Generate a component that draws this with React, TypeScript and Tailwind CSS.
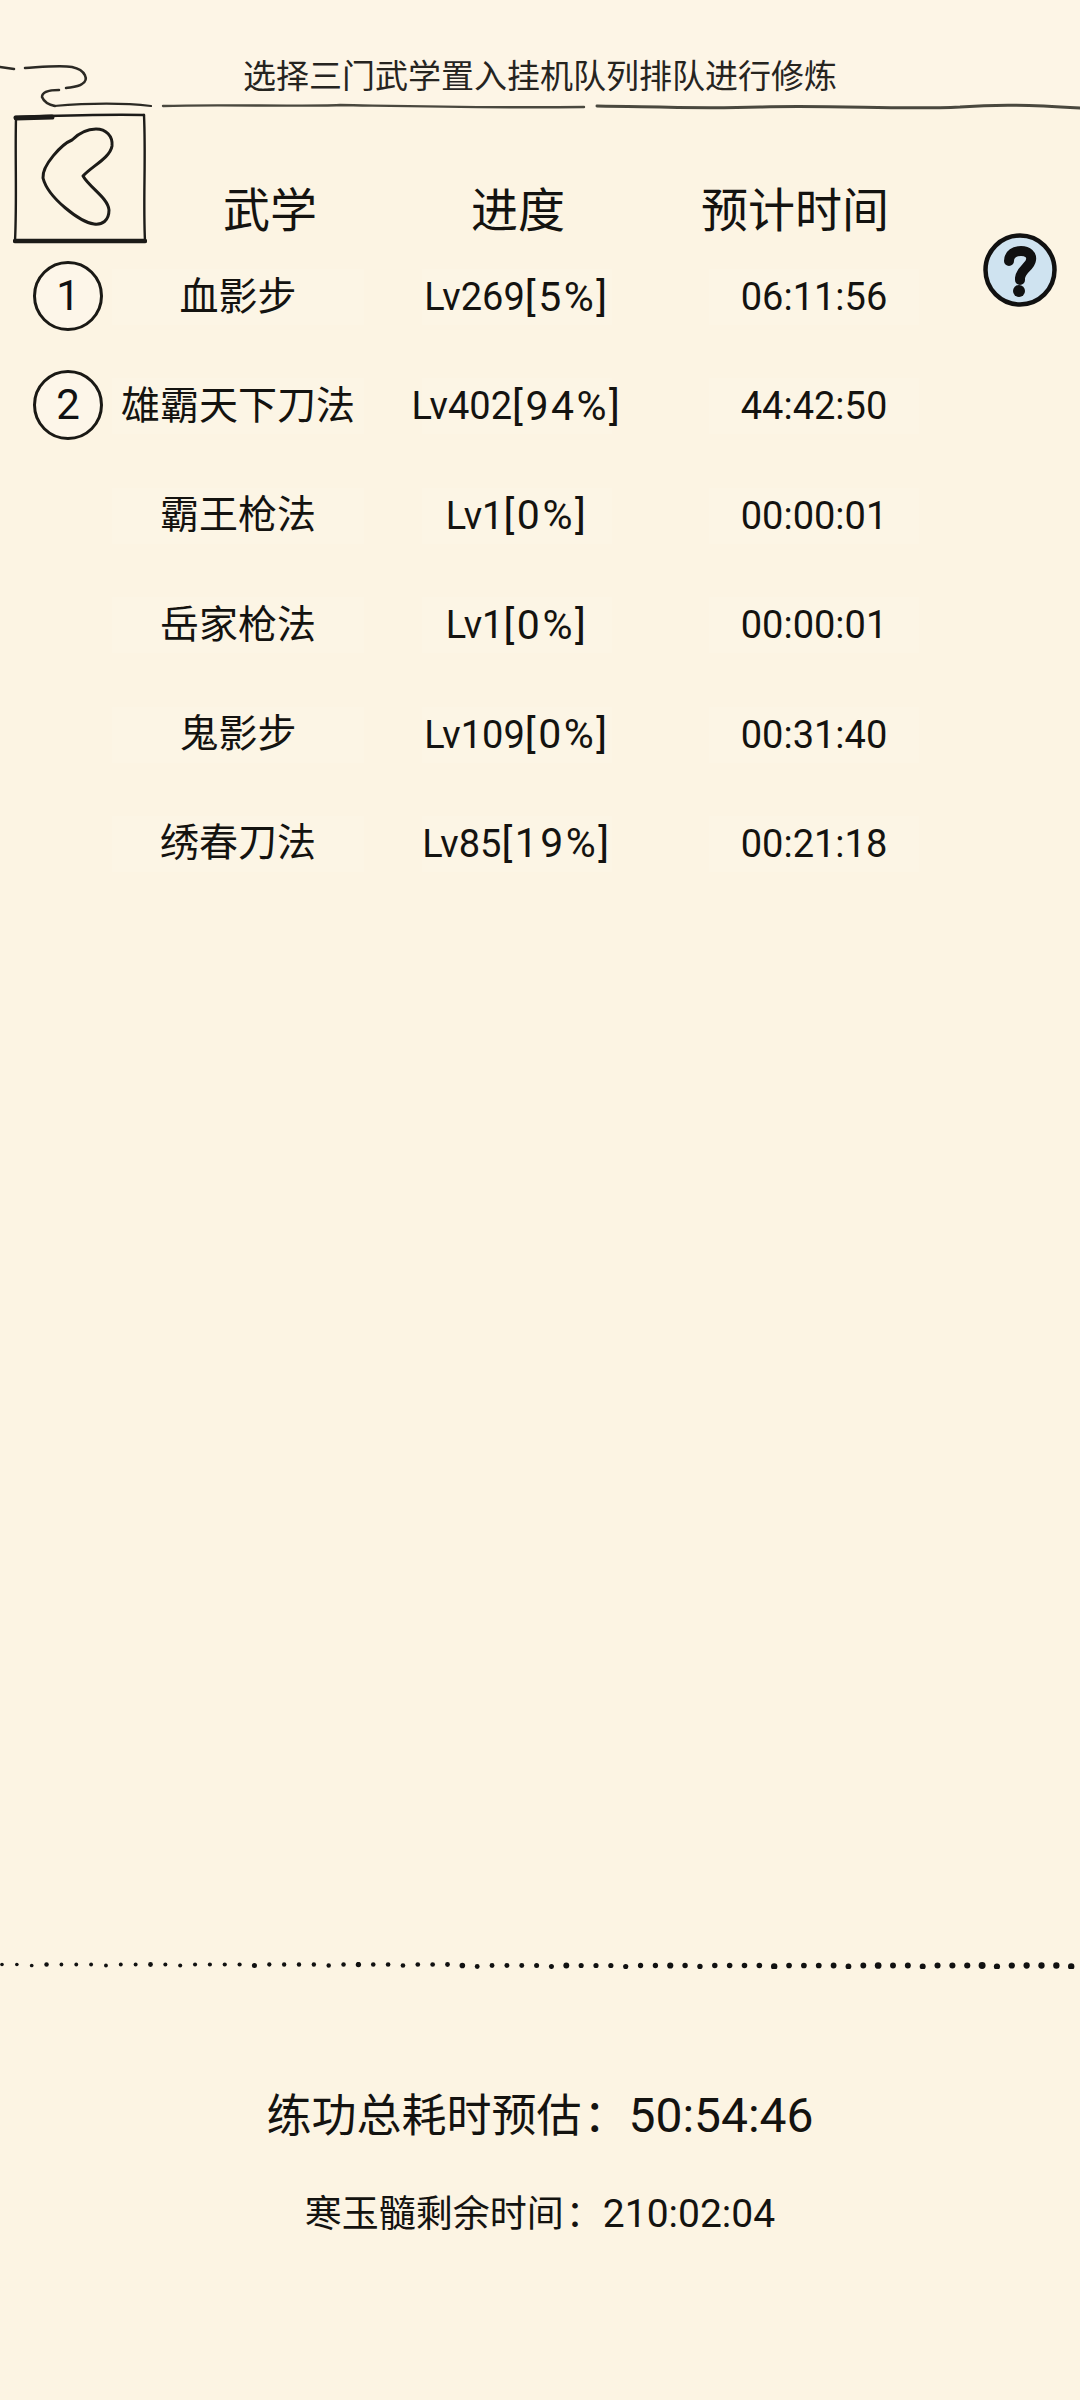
const FONT = "font-['Roboto','Noto_Sans_CJK_SC',sans-serif]";

const rows = [
  { name: "血影步", level: "Lv269", pct: "[5%]", time: "06:11:56", badge: "1" },
  { name: "雄霸天下刀法", level: "Lv402", pct: "[94%]", time: "44:42:50", badge: "2" },
  { name: "霸王枪法", level: "Lv1", pct: "[0%]", time: "00:00:01" },
  { name: "岳家枪法", level: "Lv1", pct: "[0%]", time: "00:00:01" },
  { name: "鬼影步", level: "Lv109", pct: "[0%]", time: "00:31:40" },
  { name: "绣春刀法", level: "Lv85", pct: "[19%]", time: "00:21:18" },
];

const dots = Array.from({ length: 73 }, (_, i) => ({
  x: 2 + i * 14.85,
  y: 2.5 + (i % 5 === 2 ? 1 : 0) + (i > 30 ? 1 : 0),
  r: 1.8 + (i / 72) * 1.4 + (i % 7 === 3 ? 0.4 : 0),
}));

function TopStroke() {
  return (
    <svg className="absolute left-0 top-[60px] h-[52px] w-[1080px]" viewBox="0 60 1080 52" fill="none" stroke="#2c2a25" strokeLinecap="round">
      <path d="M0 67 L14 69" strokeWidth="2.5" />
      <path d="M25 68 C42 67 60 65 72 67 C86 70 89 80 82 84 C78 87 72 87 66 88" strokeWidth="2.5" />
      <path d="M59 90 C50 90 42 92 42 97 C44 102 50 105 55 106" strokeWidth="2.5" />
      <path d="M54 106 C90 103 125 103 151 106" strokeWidth="2.2" />
      <path d="M163 106 C220 104 300 107 340 105 C400 106 470 108 584 107" strokeWidth="2.4" stroke="#4a483f" />
      <path d="M597 106 C660 107 700 109 760 107 C840 105 900 110 960 107 C1000 104 1030 105 1080 108" strokeWidth="3" stroke="#4a483f" />
    </svg>
  );
}

function BackIcon() {
  return (
    <svg className="absolute left-[13px] top-[112px] h-[132px] w-[134px]" viewBox="13 112 134 132" fill="none" stroke="#1c1b18" strokeLinecap="round" strokeLinejoin="round">
      <path d="M15 117 C50 116 100 114 144 115" strokeWidth="2.4" />
      <path d="M16 118 L52 117" strokeWidth="5" />
      <path d="M16 118 C15 160 17 200 15 241" strokeWidth="2.4" />
      <path d="M144 115 C146 160 143 200 145 241" strokeWidth="2.4" />
      <path d="M15 241 L145 241" strokeWidth="4.5" />
      <path d="M96 129 C106 129 113 136 112 146 C110 158 92 166 83 176 C90 188 108 198 109 210 C109 221 102 225 94 224 C80 222 48 198 43 178 C42 165 62 144 72 140 C78 134 86 129 96 129 Z" strokeWidth="3" />
    </svg>
  );
}

function HelpIcon() {
  return (
    <svg className="absolute left-[982px] top-[232px] h-[76px] w-[76px]" viewBox="0 0 76 76" fill="none">
      <circle cx="38" cy="38" r="34.5" fill="#cfe3f0" stroke="#111" strokeWidth="4.5" />
      <path d="M27 29 C27 22 33 19 39 19 C46 19 50 23 49 28 C48 35 39 37 38 46 L38 48" stroke="#111" strokeWidth="10" strokeLinecap="round" />
      <circle cx="37" cy="59" r="6" fill="#111" />
    </svg>
  );
}

function Badge({ n }: { n: string }) {
  return (
    <div className="absolute left-[33px] top-[-8px] flex h-[70px] w-[70px] items-center justify-center rounded-full border-[3px] border-[#1a1915] bg-[#fdf6e9] text-[42px] text-[#111]">
      {n}
    </div>
  );
}

export default function App() {
  return (
    <div className={`relative flex h-[2400px] w-[1080px] flex-col overflow-hidden bg-[#fcf4e3] text-[#141310] ${FONT}`}>
      <div className="h-[110px] bg-[#fdf5e6] pt-[55px]">
        <h1 className="text-center text-[33px] leading-[44px] font-normal text-[#26241f]">
          选择三门武学置入挂机队列排队进行修炼
        </h1>
      </div>
      <TopStroke />
      <BackIcon />
      <HelpIcon />

      <div className="mt-[63px] flex h-[74px] items-center text-[47px] leading-none">
        <span className="ml-[222px] w-[96px] text-center">武学</span>
        <span className="ml-[152px] w-[96px] text-center">进度</span>
        <span className="ml-[134px] w-[190px] text-center">预计时间</span>
      </div>

      <div className="mt-[22px] flex flex-col gap-[53.4px]">
        {rows.map((r) => (
          <div key={r.name} className="relative flex h-[56px] items-center text-[38px] leading-none">
            {r.badge && <Badge n={r.badge} />}
            <span className="ml-[112px] flex h-full w-[252px] items-center justify-center bg-[#fcf5e5] text-[39px]">{r.name}</span>
            <span className="ml-[58px] flex h-full w-[190px] items-center justify-center bg-[#fcf5e5]">
              {r.level}
              <span className="text-[41px] tracking-[2.5px]">{r.pct}</span>
            </span>
            <span className="ml-[97px] flex h-full w-[210px] items-center justify-center bg-[#fcf5e5]">{r.time}</span>
          </div>
        ))}
      </div>

      <div className="flex-1" />

      <svg className="h-[7px] w-[1080px]" viewBox="0 0 1080 7" fill="#111">
        {dots.map((d) => (
          <circle key={d.x} cx={d.x} cy={d.y} r={d.r} />
        ))}
      </svg>

      <div className="mt-[116px] flex h-[62px] items-center justify-center text-[45px] leading-none">
        <span>练功总耗时预估</span>
        <span className="ml-[2px]">：</span>
        <span className="text-[48px]">50:54:46</span>
      </div>
      <div className="mt-[42px] mb-[161px] flex h-[50px] items-center justify-center text-[37px] leading-none">
        <span>寒玉髓剩余时间</span>
        <span className="ml-[2px]">：</span>
        <span className="text-[39px]">210:02:04</span>
      </div>
    </div>
  );
}
